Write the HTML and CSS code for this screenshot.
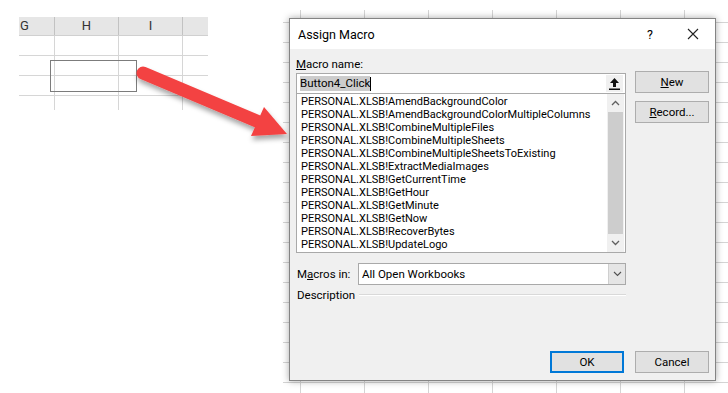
FILE: index.html
```html
<!DOCTYPE html>
<html lang="en">
  <head>
    <meta charset="UTF-8" />
    <title>Assign Macro</title>
    <link rel="stylesheet" href="styles.css">
  </head>
  <body>
    <div class="scene">
      <!-- spreadsheet crop on the left -->
      <div class="sheet">
        <div class="sheet-head">
          <div class="col col-g">G</div>
          <div class="col col-h">H</div>
          <div class="col col-i">I</div>
          <div class="col col-j"></div>
        </div>
        <div class="sheet-body">
          <div class="shape"></div>
        </div>
      </div>

      <!-- grid behind the dialog -->
      <div class="backdrop">
        <div class="dialog">
          <div class="title-bar">
            <span class="title">Assign Macro</span>
            <span class="help">?</span>
            <svg class="close" width="12" height="12" viewBox="0 0 12 12">
              <path d="M1 1 L11 11 M11 1 L1 11" stroke="#222" stroke-width="1.1" fill="none" />
            </svg>
          </div>

          <div class="dialog-body">
            <div class="content">
              <div class="main">
                <div class="label"><u>M</u>acro name:</div>
                <div class="name-input">
                  <span class="selected">Button4_Click</span><span class="caret"></span>
                  <span class="ref-btn">
                    <svg width="11" height="12" viewBox="0 0 11 12">
                      <path d="M5.5 0 L10 5 L7 5 L7 9 L4 9 L4 5 L1 5 Z" fill="#111" />
                      <rect x="0" y="10.5" width="11" height="1.5" fill="#111" />
                    </svg>
                  </span>
                </div>
                <div class="listbox">
                  <ul class="items">
                    <li>PERSONAL.XLSB!AmendBackgroundColor</li>
                    <li>PERSONAL.XLSB!AmendBackgroundColorMultipleColumns</li>
                    <li>PERSONAL.XLSB!CombineMultipleFiles</li>
                    <li>PERSONAL.XLSB!CombineMultipleSheets</li>
                    <li>PERSONAL.XLSB!CombineMultipleSheetsToExisting</li>
                    <li>PERSONAL.XLSB!ExtractMediaImages</li>
                    <li>PERSONAL.XLSB!GetCurrentTime</li>
                    <li>PERSONAL.XLSB!GetHour</li>
                    <li>PERSONAL.XLSB!GetMinute</li>
                    <li>PERSONAL.XLSB!GetNow</li>
                    <li>PERSONAL.XLSB!RecoverBytes</li>
                    <li>PERSONAL.XLSB!UpdateLogo</li>
                  </ul>
                  <div class="scrollbar">
                    <svg class="chev" width="9" height="6" viewBox="0 0 9 6">
                      <path d="M1 5 L4.5 1.5 L8 5" stroke="#606060" stroke-width="1.3" fill="none" />
                    </svg>
                    <div class="thumb"></div>
                    <svg class="chev" width="9" height="6" viewBox="0 0 9 6">
                      <path d="M1 1 L4.5 4.5 L8 1" stroke="#606060" stroke-width="1.3" fill="none" />
                    </svg>
                  </div>
                </div>

                <div class="macros-in">
                  <span class="label">M<u>a</u>cros in:</span>
                  <div class="select">
                    <span>All Open Workbooks</span>
                    <span class="drop">
                      <svg width="9" height="6" viewBox="0 0 9 6">
                        <path d="M1 1 L4.5 4.5 L8 1" stroke="#505050" stroke-width="1.1" fill="none" />
                      </svg>
                    </span>
                  </div>
                </div>

                <div class="description">
                  <span class="label">Description</span>
                  <span class="rule"></span>
                </div>
              </div>

              <div class="side">
                <button class="btn"><u>N</u>ew</button>
                <button class="btn"><u>R</u>ecord...</button>
              </div>
            </div>

            <div class="footer">
              <button class="btn btn-default">OK</button>
              <button class="btn">Cancel</button>
            </div>
          </div>
        </div>
      </div>

      <!-- red annotation arrow -->
      <svg class="arrow" width="728" height="393" viewBox="0 0 728 393">
        <defs>
          <filter id="shadow" x="-20%" y="-20%" width="140%" height="160%">
            <feDropShadow dx="1" dy="4" stdDeviation="2.5" flood-color="#000" flood-opacity="0.35" />
          </filter>
        </defs>
        <g filter="url(#shadow)" fill="#f34242">
          <path d="M143 73 L259 122" stroke="#f34242" stroke-width="13" stroke-linecap="round" />
          <polygon points="264,107 287,134 251,136" />
        </g>
      </svg>
    </div>
  </body>
</html>
```

FILE: styles.css
```css
/* General Styles */
* {
  box-sizing: border-box;
}
body {
  margin: 0;
  background: #fff;
  font-family: Roboto, "Liberation Sans", sans-serif;
  font-size: 11.5px;
  color: #000;
}
.scene {
  position: relative;
  width: 728px;
  height: 393px;
  display: flex;
  overflow: hidden;
}

/* Left spreadsheet crop */
.sheet {
  margin: 17px 0 0 19px;
  width: 189px;
  height: 93px;
}
.sheet-head {
  display: flex;
  height: 19px;
  background: #e6e6e6;
  border-bottom: 1px solid #d0d0d0;
}
.col {
  font-size: 13px;
  color: #333;
  text-align: center;
  line-height: 18px;
  border-right: 1px solid #c2c2c2;
}
.col-g {
  width: 36px;
  text-align: left;
  padding-left: 1px;
}
.col-h,
.col-i {
  width: 64px;
}
.col-j {
  flex: 1;
  border-right: none;
}
.sheet-body {
  position: relative;
  height: 74px;
  background-image:
    linear-gradient(to bottom, #d6d6d6 1px, transparent 1px),
    linear-gradient(to right, #d6d6d6 1px, transparent 1px);
  background-size: 100% 20px, 64px 100%;
  background-position: 0 19px, 35px 0;
  background-repeat: repeat-y, repeat-x;
}
.shape {
  position: absolute;
  left: 31px;
  top: 24px;
  width: 87px;
  height: 32px;
  border: 1px solid #7c7c7c;
}

/* Grid behind the dialog */
.backdrop {
  margin: 10px 0 0 75px;
  flex: 1;
  height: 383px;
  background-image:
    linear-gradient(to bottom, #d4d4d4 1px, transparent 1px),
    linear-gradient(to right, #d4d4d4 1px, transparent 1px);
  background-size: 100% 20px, 64px 100%;
  background-position: 0 12px, 17px 0;
  padding: 8px 0 0 6px;
}

/* Dialog */
.dialog {
  width: 427px;
  height: 363px;
  background: #f0f0f0;
  border: 1px solid #848484;
  box-shadow: 0 0 7px rgba(0, 0, 0, 0.35);
  display: flex;
  flex-direction: column;
}
.title-bar {
  height: 30px;
  background: #fff;
  display: flex;
  align-items: center;
  padding: 0 0 0 8px;
}
.title {
  font-size: 12.5px;
  flex: 1;
}
.help {
  font-size: 12.5px;
  margin-right: 34px;
}
.close {
  margin-right: 16px;
}
.dialog-body {
  flex: 1;
  display: flex;
  flex-direction: column;
  padding: 8px 6px 7px 6px;
}
.content {
  display: flex;
  gap: 9px;
}
.main {
  width: 330px;
}
.label {
  line-height: 14px;
}
.name-input {
  margin-top: 2px;
  height: 21px;
  background: #fff;
  border: 1px solid #a9a9a9;
  display: flex;
  align-items: center;
  padding-left: 3px;
}
.selected {
  background: #cccccc;
  line-height: 15px;
}
.caret {
  width: 1px;
  height: 14px;
  background: #000;
}
.ref-btn {
  margin-left: auto;
  margin-right: 2px;
  width: 17px;
  height: 17px;
  background: #f0f0f0;
  display: flex;
  align-items: center;
  justify-content: center;
}
.listbox {
  height: 160px;
  margin-top: -1px;
  background: #fff;
  border: 1px solid #a9a9a9;
  display: flex;
}
.items {
  list-style: none;
  margin: 0;
  padding: 1px 0 0 4px;
  flex: 1;
  font-size: 11px;
}
.items li {
  height: 13px;
  line-height: 13px;
  white-space: nowrap;
}
.scrollbar {
  width: 17px;
  margin: 0 1px 0 0;
  background: #f0f0f0;
  display: flex;
  flex-direction: column;
  align-items: center;
}
.chev {
  margin: 6px 0;
}
.thumb {
  width: 15px;
  flex: 1;
  background: #cdcdcd;
}
.macros-in {
  margin-top: 10px;
  display: flex;
  align-items: center;
}
.macros-in .label {
  width: 62px;
  padding-left: 1px;
}
.select {
  flex: 1;
  height: 22px;
  background: #fff;
  border: 1px solid #a9a9a9;
  display: flex;
  align-items: center;
  padding-left: 3px;
}
.drop {
  margin-left: auto;
  width: 17px;
  height: 20px;
  background: #e5e5e5;
  border-left: 1px solid #cfcfcf;
  display: flex;
  align-items: center;
  justify-content: center;
}
.description {
  margin-top: 3px;
  display: flex;
  align-items: center;
}
.description .label {
  padding-left: 1px;
}
.rule {
  flex: 1;
  margin-left: 4px;
  height: 2px;
  border-top: 1px solid #d9d9d9;
  border-bottom: 1px solid #fff;
}
.side {
  display: flex;
  flex-direction: column;
  gap: 8px;
  padding-top: 14px;
}
.btn {
  width: 74px;
  height: 22px;
  padding: 0;
  background: #e1e1e1;
  border: 1px solid #adadad;
  font-family: inherit;
  font-size: 11.5px;
  color: #000;
}
.btn-default {
  border: 2px solid #0078d7;
}
.footer {
  margin-top: auto;
  display: flex;
  justify-content: flex-end;
  gap: 11px;
}

/* Annotation arrow over everything */
.arrow {
  position: absolute;
  left: 0;
  top: 0;
  pointer-events: none;
}
```
